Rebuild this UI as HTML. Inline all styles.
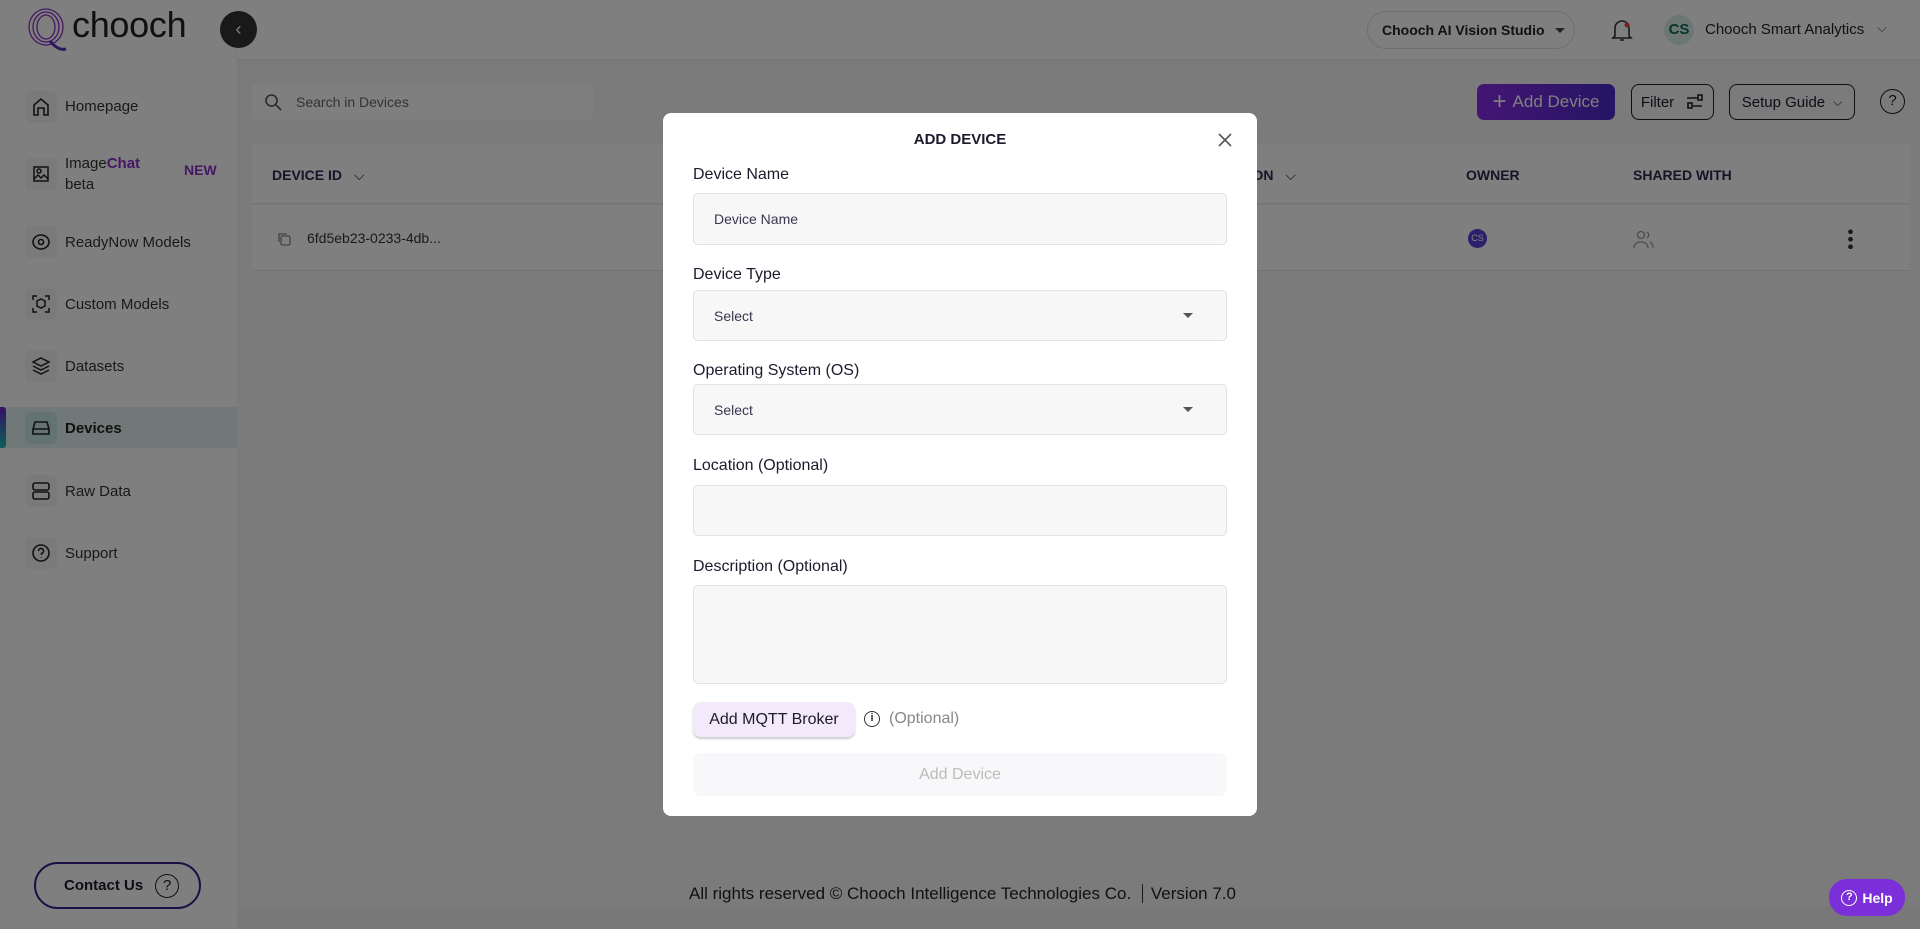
<!DOCTYPE html>
<html><head><meta charset="utf-8"><style>
*{box-sizing:border-box;margin:0;padding:0}
body{width:1920px;height:929px;position:relative;overflow:hidden;font-family:"Liberation Sans",sans-serif;background:#f6f6f6;color:#1d1a2c}
.a{position:absolute}
.side{left:0;top:0;width:237px;height:929px;background:#fff}
.hdr{left:237px;top:0;width:1683px;height:59px;background:#fff;box-shadow:0 2px 4px rgba(0,0,0,.06)}
.nav{left:25px;width:32px;height:32px;border-radius:6px;background:#f4f4f6;display:flex;align-items:center;justify-content:center}
.lbl{left:65px;font-size:15px;color:#333}
.btn{border:1.5px solid #1d1a2c;border-radius:8px;display:flex;align-items:center;justify-content:center;font-size:15px}
.ov{left:0;top:0;width:1920px;height:929px;background:rgba(0,0,0,.5)}
.modal{left:663px;top:113px;width:594px;height:703px;background:#fff;border-radius:8px}
.fl{left:30px;font-size:16px;color:#1d1a2c}
.in{left:30px;width:534px;background:#f7f7f7;border:1px solid #e2e2e2;border-radius:5px;font-size:14px;color:#3a3550;padding-left:20px;display:flex;align-items:center}
.car{position:absolute;right:33px;top:50%;margin-top:-3px;width:0;height:0;border-left:5px solid transparent;border-right:5px solid transparent;border-top:5px solid #555}
</style></head><body>
<div class="a side"></div>
<div class="a hdr"></div>
<svg class="a" style="left:24px;top:5px" width="52" height="52" viewBox="0 0 52 52"><g fill="none" stroke="#8a2fc9" stroke-width="1.3"><ellipse cx="22" cy="22" rx="17" ry="18"/><ellipse cx="22" cy="22" rx="13" ry="15"/><ellipse cx="22" cy="22" rx="9" ry="12"/><path d="M26 36 q8 10 16 8" stroke="#5b2bb5" stroke-width="3"/></g></svg>
<div class="a" style="left:72px;top:4px;font-size:36px;color:#222;letter-spacing:-0.3px;font-weight:500">chooch</div>
<div class="a" style="left:220px;top:11px;width:37px;height:37px;border-radius:50%;background:#333;color:#fff;font-size:18px;text-align:center;line-height:36px">‹</div>
<div class="a" style="left:0;top:407px;width:237px;height:41px;background:#e3f3f1"></div>
<div class="a" style="left:0;top:407px;width:6px;height:41px;border-radius:0 3px 3px 0;background:linear-gradient(#6a1fd0,#18c2b0)"></div>
<div class="a nav" style="top:91px"><svg width="20" height="20" viewBox="0 0 20 20" fill="none" stroke="#222" stroke-width="1.6"><path d="M3 18V8l7-6 7 6v10h-4v-7H7v7z"/></svg></div>
<div class="a lbl" style="top:98px">Homepage</div>
<div class="a nav" style="top:158px"><svg width="20" height="20" viewBox="0 0 20 20" fill="none" stroke="#222" stroke-width="1.5"><rect x="3" y="3" width="14" height="14"/><circle cx="8" cy="7" r="2"/><path d="M3 15l4-4 3 3 3-3 4 4"/></svg></div>
<div class="a lbl" style="top:155px">Image<b style="color:#8a2fc9">Chat</b></div>
<div class="a lbl" style="top:176px">beta</div>
<div class="a" style="left:184px;top:162px;font-size:14px;font-weight:bold;color:#8a2fc9">NEW</div>
<div class="a nav" style="top:226px"><svg width="20" height="20" viewBox="0 0 20 20" fill="none" stroke="#222" stroke-width="1.6"><ellipse cx="10" cy="10" rx="8" ry="7"/><circle cx="10" cy="10" r="2.5"/></svg></div>
<div class="a lbl" style="top:234px">ReadyNow Models</div>
<div class="a nav" style="top:288px"><svg width="20" height="20" viewBox="0 0 20 20" fill="none" stroke="#222" stroke-width="1.5"><path d="M2 6V2h4M14 2h4v4M18 14v4h-4M6 18H2v-4"/><path d="M10 5l4 2v5l-4 2-4-2V7z"/></svg></div>
<div class="a lbl" style="top:296px">Custom Models</div>
<div class="a nav" style="top:350px"><svg width="20" height="20" viewBox="0 0 20 20" fill="none" stroke="#222" stroke-width="1.5"><path d="M10 2l8 4-8 4-8-4z"/><path d="M2 10l8 4 8-4M2 14l8 4 8-4"/></svg></div>
<div class="a lbl" style="top:358px">Datasets</div>
<div class="a nav" style="top:412px;background:#c4e7e3"><svg width="20" height="20" viewBox="0 0 20 20" fill="none" stroke="#222" stroke-width="1.6"><path d="M2 11l2-7h12l2 7v5H2z M2 11h16"/></svg></div>
<div class="a lbl" style="top:420px;font-weight:bold;color:#222">Devices</div>
<div class="a nav" style="top:475px"><svg width="20" height="20" viewBox="0 0 20 20" fill="none" stroke="#222" stroke-width="1.6"><rect x="2" y="2" width="16" height="7" rx="2"/><rect x="2" y="11" width="16" height="7" rx="2"/></svg></div>
<div class="a lbl" style="top:483px">Raw Data</div>
<div class="a nav" style="top:537px"><svg width="20" height="20" viewBox="0 0 20 20" fill="none" stroke="#222" stroke-width="1.6"><circle cx="10" cy="10" r="8"/><path d="M7.5 8a2.5 2.5 0 1 1 3 2.4V12M10 14.5v.5"/></svg></div>
<div class="a lbl" style="top:545px">Support</div>
<div class="a" style="left:34px;top:862px;width:167px;height:47px;border:2px solid #3a1c8a;border-radius:24px;display:flex;align-items:center;padding-left:28px;font-size:15px;font-weight:bold;color:#1d1a2c">Contact Us<span style="margin-left:12px;width:24px;height:24px;border:1.5px solid #222;border-radius:50%;text-align:center;line-height:21px;font-weight:normal">?</span></div>
<div class="a" style="left:1367px;top:11px;width:208px;height:38px;border:1px solid #ddd;border-radius:19px;font-size:14px;font-weight:bold;display:flex;align-items:center;padding-left:14px;color:#222">Chooch AI Vision Studio<span style="margin-left:10px;border-left:5px solid transparent;border-right:5px solid transparent;border-top:5px solid #444"></span></div>
<svg class="a" style="left:1611px;top:17px" width="22" height="26" viewBox="0 0 22 26" fill="none" stroke="#333" stroke-width="1.6"><path d="M4 19V11a7 7 0 0 1 14 0v8l2 2H2z M9 23h4"/><circle cx="16" cy="8" r="2.5" fill="#e0483a" stroke="none"/></svg>
<div class="a" style="left:1664px;top:15px;width:30px;height:30px;border-radius:50%;background:#d8efe9;color:#0c6a57;font-weight:bold;font-size:15px;text-align:center;line-height:30px">CS</div>
<div class="a" style="left:1705px;top:21px;font-size:15px;color:#222">Chooch Smart Analytics</div>
<div class="a" style="left:1877px;top:20px;font-size:13px;color:#555">⌵</div>
<div class="a" style="left:252px;top:83px;width:341px;height:37px;background:#fff;border-radius:5px;display:flex;align-items:center;padding-left:12px;font-size:14px;color:#666"><svg width="18" height="18" viewBox="0 0 18 18" fill="none" stroke="#555" stroke-width="1.6"><circle cx="7.5" cy="7.5" r="5.5"/><path d="M12 12l5 5"/></svg><span style="margin-left:14px">Search in Devices</span></div>
<div class="a" style="left:1477px;top:84px;width:138px;height:36px;border-radius:7px;background:linear-gradient(90deg,#8a2ae8,#4a2bc8);color:#fff;font-size:17px;display:flex;align-items:center;justify-content:center"><span style="font-size:24px;margin-right:6px;line-height:20px">+</span>Add Device</div>
<div class="a btn" style="left:1631px;top:84px;width:83px;height:36px">Filter<svg style="margin-left:12px" width="18" height="16" viewBox="0 0 18 16" fill="none" stroke="#222" stroke-width="1.6"><path d="M1 4h10M16 12H7"/><rect x="12" y="1" width="4" height="5"/><rect x="2" y="9" width="4" height="5"/></svg></div>
<div class="a btn" style="left:1729px;top:84px;width:126px;height:36px">Setup Guide<span style="margin-left:8px;font-size:12px">⌵</span></div>
<div class="a" style="left:1880px;top:89px;width:25px;height:25px;border:1.6px solid #1d1a2c;border-radius:50%;text-align:center;line-height:22px;font-size:15px">?</div>
<div class="a" style="left:252px;top:144px;width:1658px;height:60px;background:#fff;border-bottom:1px solid #e6e6e6"></div>
<div class="a" style="left:252px;top:205px;width:1658px;height:66px;background:#fff;border-bottom:1px solid #e6e6e6"></div>
<div class="a" style="left:272px;top:167px;font-size:14px;font-weight:bold;color:#2c2850">DEVICE ID <span style="font-weight:normal;margin-left:8px">⌵</span></div>
<div class="a" style="left:1240px;top:167px;font-size:14px;font-weight:bold;color:#2c2850">TION <span style="font-weight:normal;margin-left:8px">⌵</span></div>
<div class="a" style="left:1466px;top:167px;font-size:14px;font-weight:bold;color:#2c2850">OWNER</div>
<div class="a" style="left:1633px;top:167px;font-size:14px;font-weight:bold;color:#2c2850">SHARED WITH</div>
<svg class="a" style="left:276px;top:231px" width="16" height="16" viewBox="0 0 16 16" fill="none" stroke="#888" stroke-width="1.3"><rect x="5" y="5" width="9" height="9" rx="1.5"/><path d="M3 11V3h8"/></svg>
<div class="a" style="left:307px;top:230px;font-size:14px;color:#333">6fd5eb23-0233-4db...</div>
<div class="a" style="left:1468px;top:229px;width:19px;height:19px;border-radius:50%;background:#5a3fd8;color:#fff;font-size:9px;text-align:center;line-height:19px">CS</div>
<svg class="a" style="left:1633px;top:229px" width="22" height="20" viewBox="0 0 22 20" fill="none" stroke="#999" stroke-width="1.3"><circle cx="8" cy="6" r="3.5"/><path d="M1 19c0-4 3-6 7-6s7 2 7 6M14 3a3.5 3.5 0 0 1 0 6M17 13c2 1 3 3 3 6"/></svg>
<div class="a" style="left:1848px;top:228px;width:5px;height:22px;background:radial-gradient(circle,#333 2.2px,transparent 2.5px) 0 0/5px 7.5px"></div>
<div class="a" style="left:237px;top:907px;width:1683px;height:22px;background:#f1f1f1"></div>
<div class="a" style="left:689px;top:884px;font-size:17px;color:#222">All rights reserved © Chooch Intelligence Technologies Co. <span style="border-left:1px solid #333;margin:0 8px 0 6px"></span> Version 7.0</div>
<div class="a ov"></div>
<div class="a modal">
 <div class="a" style="left:0;width:594px;top:18px;text-align:center;font-size:15px;font-weight:bold;color:#1d1a2c">ADD DEVICE</div>
 <svg class="a" style="left:554px;top:19px" width="16" height="16" viewBox="0 0 16 16" stroke="#555" stroke-width="1.6"><path d="M2 2l12 12M14 2L2 14"/></svg>
 <div class="a fl" style="top:53px">Device Name</div>
 <div class="a in" style="top:80px;height:52px">Device Name</div>
 <div class="a fl" style="top:153px">Device Type</div>
 <div class="a in" style="top:177px;height:51px">Select<span class="car"></span></div>
 <div class="a fl" style="top:249px">Operating System (OS)</div>
 <div class="a in" style="top:271px;height:51px">Select<span class="car"></span></div>
 <div class="a fl" style="top:344px">Location (Optional)</div>
 <div class="a in" style="top:372px;height:51px"></div>
 <div class="a fl" style="top:445px">Description (Optional)</div>
 <div class="a in" style="top:472px;height:99px"></div>
 <div class="a" style="left:30px;top:589px;width:162px;height:35px;border-radius:8px;background:#f2eafb;box-shadow:0 2px 2px rgba(0,0,0,.2);font-size:16px;color:#1d1a2c;display:flex;align-items:center;justify-content:center">Add MQTT Broker</div>
 <div class="a" style="left:201px;top:598px;width:16px;height:16px;border:1.6px solid #333;border-radius:50%;font-size:11px;font-weight:bold;text-align:center;line-height:13px;color:#333">i</div>
 <div class="a" style="left:226px;top:597px;font-size:16px;color:#888">(Optional)</div>
 <div class="a" style="left:30px;top:640px;width:534px;height:43px;border-radius:8px;background:#f8f8fa;font-size:16px;color:#bbb;display:flex;align-items:center;justify-content:center">Add Device</div>
</div>
<div class="a" style="left:1829px;top:879px;width:76px;height:37px;border-radius:18px;background:#7b2fd8;color:#fff;font-weight:bold;font-size:14px;display:flex;align-items:center;justify-content:center"><span style="width:16px;height:16px;border:1.5px solid #fff;border-radius:50%;font-size:11px;text-align:center;line-height:13px;margin-right:5px">?</span>Help</div>
</body></html>
